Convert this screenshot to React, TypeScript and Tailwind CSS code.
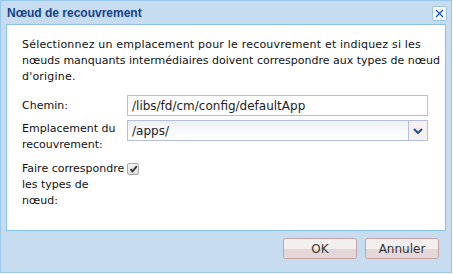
import React from "react";

export default function App() {
  const font = { fontFamily: "'DejaVu Sans', Verdana, sans-serif" };
  return (
    <div className="w-[453px] h-[274px] bg-white" style={font}>
      <div className="w-[452px] h-[273px] border border-[#99c8ee] bg-[#c7ddef] flex flex-col">
        <div className="h-[23px] flex items-center justify-between pl-[6px] pr-[4px]">
          <span className="text-[12px] font-bold text-[#15428b] leading-none" style={{ fontFamily: "'Liberation Sans', Arial, sans-serif" }}>Nœud de recouvrement</span>
          <div className="w-[15px] h-[15px] mt-[1px] border border-[#9fc3e4] rounded-[2px] bg-[#f4f8fc] flex items-center justify-center">
            <svg width="9" height="9" viewBox="0 0 9 9">
              <path d="M1 1 L8 8 M8 1 L1 8" stroke="#1f5aa6" strokeWidth="1.3" />
            </svg>
          </div>
        </div>
        <div className="mx-[5px] h-[207px] border border-[#8cc1ec] bg-white pl-[15px] pr-[6px] pt-[12px] text-[11px] text-[#111] leading-[16px]">
          <p className="mb-[10px] whitespace-nowrap">
            <span className="tracking-[0.2px]">Sélectionnez un emplacement pour le recouvrement et indiquez si les</span>
            <br />
            <span>nœuds manquants intermédiaires doivent correspondre aux types de nœud</span>
            <br />
            <span className="tracking-[0.2px]">d'origine.</span>
          </p>
          <div className="flex items-center h-[21px] mb-[5px] mr-[11px]">
            <div className="w-[105px]">Chemin:</div>
            <div className="flex-1 h-[21px] border border-[#b5bfe0] flex items-center px-[4px] text-[12px] text-[#222]">/libs/fd/cm/config/defaultApp</div>
          </div>
          <div className="flex items-start mb-[8px] mr-[11px]">
            <div className="w-[105px]">Emplacement du recouvrement:</div>
            <div className="flex-1 h-[21px] border border-[#b5bfe0] flex items-center text-[12px] text-[#222] mt-[-1px]">
              <div className="flex-1 px-[4px] bg-gradient-to-b from-[#eef2f5] to-white h-full flex items-center">/apps/</div>
              <div className="w-[19px] h-full border-l border-[#b5bfe0] bg-[#f7f2f2] flex items-center justify-center">
                <svg width="10" height="6" viewBox="0 0 10 6">
                  <path d="M1 1 L5 5 L9 1" stroke="#1d4e8f" strokeWidth="2" fill="none" />
                </svg>
              </div>
            </div>
          </div>
          <div className="flex items-start">
            <div className="w-[105px]">Faire correspondre les types de nœud:</div>
            <div className="w-[12px] h-[12px] mt-[2px] border border-[#a9a9a9] rounded-[2px] bg-gradient-to-b from-[#f6f6f6] to-[#dcdcdc] flex items-center justify-center">
              <svg width="9" height="8" viewBox="0 0 9 8">
                <path d="M1.5 4.2 L3.5 6.3 L7.8 1.2" stroke="#333" strokeWidth="1.8" fill="none" />
              </svg>
            </div>
          </div>
        </div>
        <div className="flex justify-end gap-[8px] pr-[12px] pt-[7px]">
          {["OK", "Annuler"].map((t) => (
            <div key={t} className="w-[74px] h-[21px] rounded-[3px] border border-[#c8a2a2] flex flex-col overflow-hidden relative">
              <div className="h-1/2 bg-[#f4efef]" />
              <div className="h-1/2 bg-[#e5d7d7]" />
              <span className="absolute inset-0 flex items-center justify-center text-[12px] text-[#333]">{t}</span>
            </div>
          ))}
        </div>
      </div>
    </div>
  );
}
